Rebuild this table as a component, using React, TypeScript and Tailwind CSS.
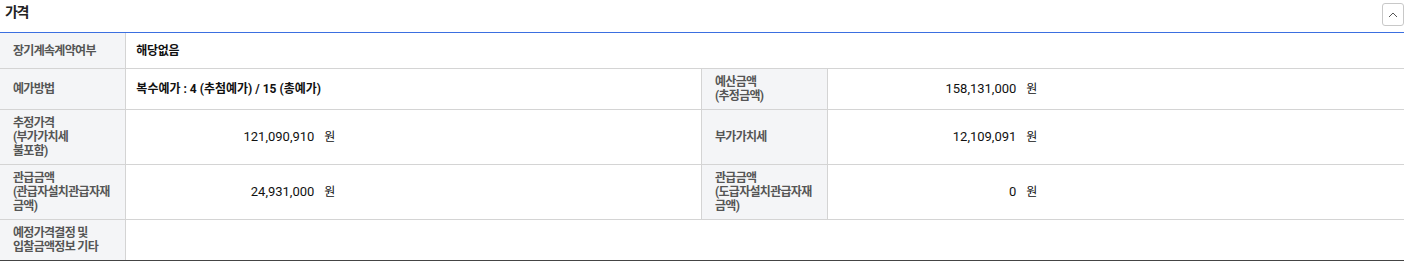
import React from "react";

const KR = "font-['Roboto','Noto_Sans_CJK_KR',sans-serif]";

function Label({ children }: { children: React.ReactNode }) {
  return (
    <div className="flex items-center whitespace-nowrap bg-[#f4f5f7] border-r border-[#d4d4d4] pl-[13px] pr-[4px] py-[6px] text-[12px] leading-[14px] font-bold tracking-[-0.7px] text-[#555]">
      <div>{children}</div>
    </div>
  );
}

function Amount({ value }: { value: string }) {
  return (
    <div className="flex items-center pl-[10px] text-[13px] text-[#111]">
      <span className="inline-block w-[178px] text-right">{value}</span>
      <span className="ml-[10px] text-[12px] tracking-[-0.5px]">원</span>
    </div>
  );
}

export default function App() {
  return (
    <div className={`${KR} w-[1404px] bg-white`}>
      <div className="flex h-[32px] items-start justify-between">
        <h2 className="pl-[5px] pt-[4px] text-[14px] font-bold leading-[16px] tracking-[-1.5px] text-[#222]">가격</h2>
        <button className="mt-[3px] flex h-[23px] w-[22px] items-center justify-center rounded-[3px] border border-[#c8c8c8] bg-white">
          <svg width="10" height="6" viewBox="0 0 10 6" fill="none">
            <path d="M1 5 L5 1 L9 5" stroke="#555" strokeWidth="1" />
          </svg>
        </button>
      </div>
      <div className="border-t border-[#3b6fe0] border-b border-b-[#444]">
        <div className="grid grid-cols-[9%_91%] min-h-[36px] border-b border-[#d4d4d4]">
          <Label>장기계속계약여부</Label>
          <div className="flex items-center pl-[10px] text-[12px] font-bold tracking-[-0.3px] text-[#111]">해당없음</div>
        </div>
        <div className="grid grid-cols-[9%_41%_9%_41%] border-b border-[#d4d4d4]">
          <Label>예가방법</Label>
          <div className="flex items-center border-r border-[#d4d4d4] pl-[10px] text-[12px] font-bold text-[#111]">
            복수예가 : 4 (추첨예가) / 15 (총예가)
          </div>
          <Label>
            예산금액
            <br />
            (추정금액)
          </Label>
          <Amount value="158,131,000" />
        </div>
        <div className="grid grid-cols-[9%_41%_9%_41%] border-b border-[#d4d4d4]">
          <Label>
            추정가격
            <br />
            (부가가치세
            <br />
            불포함)
          </Label>
          <div className="border-r border-[#d4d4d4]">
            <div className="flex h-full items-center">
              <Amount value="121,090,910" />
            </div>
          </div>
          <Label>부가가치세</Label>
          <Amount value="12,109,091" />
        </div>
        <div className="grid grid-cols-[9%_41%_9%_41%] border-b border-[#d4d4d4]">
          <Label>
            관급금액
            <br />
            (관급자설치관급자재
            <br />
            금액)
          </Label>
          <div className="border-r border-[#d4d4d4]">
            <div className="flex h-full items-center">
              <Amount value="24,931,000" />
            </div>
          </div>
          <Label>
            관급금액
            <br />
            (도급자설치관급자재
            <br />
            금액)
          </Label>
          <Amount value="0" />
        </div>
        <div className="grid grid-cols-[9%_91%]">
          <Label>
            예정가격결정 및
            <br />
            입찰금액정보 기타
          </Label>
          <div />
        </div>
      </div>
    </div>
  );
}
